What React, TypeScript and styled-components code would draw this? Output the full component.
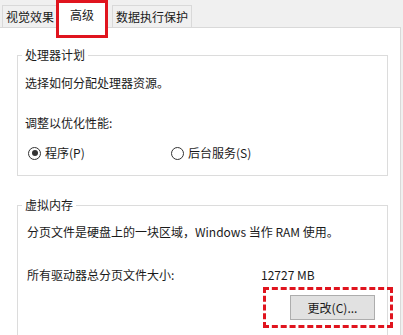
import React from 'react';
import styled, { createGlobalStyle } from 'styled-components';

const GlobalStyle = createGlobalStyle`
  html, body {
    margin: 0;
    padding: 0;
    background: #ffffff;
  }
  body {
    font-family: "Noto Sans CJK SC", "Noto Sans", sans-serif;
    font-size: 12px;
    color: #1a1a1a;
  }
`;

const tabs = [
  { label: '视觉效果', active: false },
  { label: '高级', active: true },
  { label: '数据执行保护', active: false }
];

const App = () => {
  return (
    <>
      <GlobalStyle />
      <Window>
        <TabStrip>
          {tabs.map((tab) =>
            tab.active ? (
              <ActiveTab key={tab.label}>{tab.label}</ActiveTab>
            ) : (
              <Tab key={tab.label}>{tab.label}</Tab>
            )
          )}
        </TabStrip>
        <Panel>
          <Group $gap={21}>
            <Legend>处理器计划</Legend>
            <GroupBody $padLeft={7} $padTop={12} $padBottom={14}>
              <Line>选择如何分配处理器资源。</Line>
              <Line $top={24}>调整以优化性能:</Line>
              <RadioRow>
                <RadioItem $width={143}>
                  <RadioCircle $checked />
                  程序(P)
                </RadioItem>
                <RadioItem>
                  <RadioCircle />
                  后台服务(S)
                </RadioItem>
              </RadioRow>
            </GroupBody>
          </Group>
          <Group>
            <Legend>虚拟内存</Legend>
            <GroupBody $padLeft={9} $padTop={11} $padBottom={20}>
              <Line>分页文件是硬盘上的一块区域，Windows 当作 RAM 使用。</Line>
              <SizeRow>
                <SizeLabel>所有驱动器总分页文件大小:</SizeLabel>
                <span>12727 MB</span>
              </SizeRow>
              <ButtonRow>
                <ButtonWrap>
                  <ChangeButton>更改(C)...</ChangeButton>
                  <Highlight />
                </ButtonWrap>
              </ButtonRow>
            </GroupBody>
          </Group>
        </Panel>
      </Window>
    </>
  );
};

const Window = styled.div`
  width: 403px;
  height: 335px;
  display: flex;
  flex-direction: column;
  background: #f0f0f0;
  overflow: hidden;
`;

const TabStrip = styled.div`
  height: 27px;
  display: flex;
  align-items: flex-end;
  padding-left: 2px;
  flex-shrink: 0;
  position: relative;
  z-index: 1;
`;

const Tab = styled.div`
  height: 21px;
  padding: 0 3px;
  display: flex;
  align-items: center;
  border: 1px solid #d9d9d9;
  border-bottom: none;
  background: #f0f0f0;
  line-height: 16px;
  white-space: nowrap;
`;

const ActiveTab = styled.div`
  align-self: flex-start;
  width: 46px;
  height: 28px;
  margin-left: -2px;
  margin-right: 4px;
  margin-bottom: -7px;
  border: 3px solid #e0141e;
  background: #ffffff;
  display: flex;
  justify-content: center;
  padding-top: 4px;
  line-height: 16px;
  box-sizing: content-box;
  white-space: nowrap;
`;

const Panel = styled.div`
  flex: 1;
  width: 400px;
  background: #ffffff;
  border-top: 1px solid #d9d9d9;
  border-right: 1px solid #d9d9d9;
  padding-top: 19px;
`;

const Group = styled.fieldset<{ $gap?: number }>`
  margin: 0 12px ${(p) => p.$gap ?? 0}px 17px;
  padding: 0;
  border: 1px solid #dcdcdc;
  min-width: 0;
`;

const Legend = styled.legend`
  margin-left: 4px;
  padding: 0 3px;
  line-height: 16px;
`;

const GroupBody = styled.div<{ $padLeft: number; $padTop: number; $padBottom: number }>`
  display: flex;
  flex-direction: column;
  padding: ${(p) => p.$padTop}px 0 ${(p) => p.$padBottom}px ${(p) => p.$padLeft}px;
`;

const Line = styled.div<{ $top?: number }>`
  line-height: 16px;
  margin-top: ${(p) => p.$top ?? 0}px;
  white-space: nowrap;
`;

const RadioRow = styled.div`
  display: flex;
  margin-top: 14px;
  padding-left: 3px;
  line-height: 16px;
`;

const RadioItem = styled.div<{ $width?: number }>`
  display: flex;
  align-items: center;
  gap: 4px;
  width: ${(p) => (p.$width ? `${p.$width}px` : 'auto')};
`;

const RadioCircle = styled.span<{ $checked?: boolean }>`
  width: 11px;
  height: 11px;
  border: 1px solid #333333;
  border-radius: 50%;
  display: flex;
  align-items: center;
  justify-content: center;
  box-sizing: content-box;
  &::after {
    content: '';
    width: 6px;
    height: 6px;
    border-radius: 50%;
    background: #333333;
    display: ${(p) => (p.$checked ? 'block' : 'none')};
  }
`;

const SizeRow = styled.div`
  display: flex;
  margin-top: 27px;
  line-height: 16px;
`;

const SizeLabel = styled.span`
  width: 234px;
`;

const ButtonRow = styled.div`
  display: flex;
  justify-content: flex-end;
  margin-top: 12px;
  padding-right: 12px;
`;

const ButtonWrap = styled.div`
  position: relative;
`;

const ChangeButton = styled.button`
  width: 85px;
  height: 25px;
  background: #e1e1e1;
  border: 1px solid #adadad;
  font-family: "Noto Sans CJK SC", "Noto Sans", sans-serif;
  font-size: 12px;
  color: #1a1a1a;
  padding: 0;
`;

const Highlight = styled.div`
  position: absolute;
  left: -27px;
  top: -8px;
  width: 124px;
  height: 35px;
  border: 3px dashed #e0141e;
  pointer-events: none;
`;

export default App;
